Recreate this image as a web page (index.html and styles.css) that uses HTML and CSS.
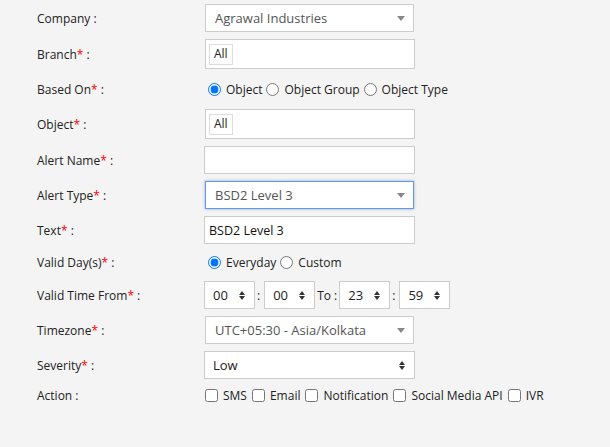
FILE: index.html
```html
<!DOCTYPE html>
<html>
<head>
    <meta name="viewport" content="width=device-width, initial-scale=1.0">
    <link rel="stylesheet" href="styles.css">
</head>
<body>
    <form class="alert-form">
        <div class="row">
            <label class="lbl">Company :</label>
            <div class="box select2">
                <span class="val">Agrawal Industries</span>
                <svg class="caret" width="8" height="5" viewBox="0 0 8 5"><path d="M0 0h8L4 5z" fill="#888"/></svg>
            </div>
        </div>
        <div class="row">
            <label class="lbl">Branch<span class="req">*</span> :</label>
            <div class="box tags"><span class="tag">All</span></div>
        </div>
        <div class="row row-radio r1">
            <label class="lbl">Based On<span class="req">*</span> :</label>
            <div class="opts">
                <label class="opt"><input type="radio" name="based" checked> Object</label>
                <label class="opt"><input type="radio" name="based"> Object Group</label>
                <label class="opt"><input type="radio" name="based"> Object Type</label>
            </div>
        </div>
        <div class="row">
            <label class="lbl">Object<span class="req">*</span> :</label>
            <div class="box tags"><span class="tag">All</span></div>
        </div>
        <div class="row">
            <label class="lbl">Alert Name<span class="req">*</span> :</label>
            <div class="box input"></div>
        </div>
        <div class="row">
            <label class="lbl">Alert Type<span class="req">*</span> :</label>
            <div class="box select2 focused">
                <span class="val">BSD2 Level 3</span>
                <svg class="caret" width="8" height="5" viewBox="0 0 8 5"><path d="M0 0h8L4 5z" fill="#888"/></svg>
            </div>
        </div>
        <div class="row">
            <label class="lbl">Text<span class="req">*</span> :</label>
            <div class="box input"><span class="typed">BSD2 Level 3</span></div>
        </div>
        <div class="row row-radio r2">
            <label class="lbl">Valid Day(s)<span class="req">*</span> :</label>
            <div class="opts">
                <label class="opt"><input type="radio" name="day" checked> Everyday</label>
                <label class="opt"><input type="radio" name="day"> Custom</label>
            </div>
        </div>
        <div class="row">
            <label class="lbl">Valid Time From<span class="req">*</span> :</label>
            <div class="times">
                <div class="box time"><span class="val">00</span><svg class="updown" width="6" height="9" viewBox="0 0 6 9"><path d="M0 4h6L3 0zM0 5h6L3 9z" fill="#333"/></svg></div>
                <span class="sep">:</span>
                <div class="box time"><span class="val">00</span><svg class="updown" width="6" height="9" viewBox="0 0 6 9"><path d="M0 4h6L3 0zM0 5h6L3 9z" fill="#333"/></svg></div>
                <span class="to">To :</span>
                <div class="box time"><span class="val">23</span><svg class="updown" width="6" height="9" viewBox="0 0 6 9"><path d="M0 4h6L3 0zM0 5h6L3 9z" fill="#333"/></svg></div>
                <span class="sep">:</span>
                <div class="box time"><span class="val">59</span><svg class="updown" width="6" height="9" viewBox="0 0 6 9"><path d="M0 4h6L3 0zM0 5h6L3 9z" fill="#333"/></svg></div>
            </div>
        </div>
        <div class="row">
            <label class="lbl">Timezone<span class="req">*</span> :</label>
            <div class="box select2">
                <span class="val">UTC+05:30 - Asia/Kolkata</span>
                <svg class="caret" width="8" height="5" viewBox="0 0 8 5"><path d="M0 0h8L4 5z" fill="#888"/></svg>
            </div>
        </div>
        <div class="row">
            <label class="lbl">Severity<span class="req">*</span> :</label>
            <div class="box native">
                <span class="val">Low</span>
                <svg class="updown" width="6" height="9" viewBox="0 0 6 9"><path d="M0 4h6L3 0zM0 5h6L3 9z" fill="#333"/></svg>
            </div>
        </div>
        <div class="row row-check">
            <label class="lbl">Action :</label>
            <div class="opts">
                <label class="chk"><input type="checkbox"> SMS</label>
                <label class="chk"><input type="checkbox"> Email</label>
                <label class="chk"><input type="checkbox"> Notification</label>
                <label class="chk"><input type="checkbox"> Social Media API</label>
                <label class="chk"><input type="checkbox"> IVR</label>
            </div>
        </div>
    </form>
</body>
</html>
```

FILE: styles.css
```css
body {
    margin: 0;
    background: #f4f4f4;
    font-family: "Open Sans", Arial, sans-serif;
    font-size: 12px;
    color: #222;
}
.alert-form {
    padding: 4px 0 0 37px;
}
.row {
    display: flex;
    align-items: center;
    margin-bottom: 7px;
    min-height: 28px;
}
.row-radio.r1 {
    min-height: 26px;
}
.row-radio.r2 {
    min-height: 23px;
}
.row-check {
    min-height: 18px;
}
.lbl {
    width: 167px;
    flex-shrink: 0;
}
.req {
    color: #f00;
}
.box {
    box-sizing: border-box;
    width: 211px;
    height: 28px;
    background: #fff;
    border: 1px solid #ccc;
    display: flex;
    align-items: center;
}
.select2 {
    margin-left: 1px;
    width: 209px;
    padding: 0 8px 0 9px;
    color: #555;
    font-size: 13px;
}
.select2 .caret {
    margin-left: auto;
}
.focused {
    border-color: #5897fb;
    box-shadow: 0 0 3px rgba(0, 0, 0, 0.3);
}
.tags {
    margin-left: 1px;
    width: 210px;
    height: 30px;
    padding: 0 3px;
}
.tag {
    border: 1px solid #ddd;
    padding: 2px 4px 3px;
    line-height: 14px;
}
.input {
    padding: 0 4px;
    font-size: 12.5px;
    color: #111;
}
.native {
    padding: 0 9px 0 8px;
    font-size: 13px;
}
.native .updown {
    margin-left: auto;
}
.opts {
    display: flex;
    align-items: center;
}
.opt, .chk {
    display: flex;
    align-items: center;
}
.opt input, .chk input {
    width: 13px;
    height: 13px;
    margin: 0 5px 0 4px;
}
.opt:first-child input {
    margin-left: 4px;
}
.chk input {
    margin-left: 5px;
}
.chk:first-child input {
    margin-left: 1px;
}
.times {
    display: flex;
    align-items: center;
}
.time {
    width: 51px;
    padding: 0 9px 0 8px;
    font-size: 13px;
}
.time .updown {
    margin-left: auto;
}
.sep {
    margin: 0 4px 0 2px;
}
.to {
    margin: 0 2px 0 2px;
}
```
